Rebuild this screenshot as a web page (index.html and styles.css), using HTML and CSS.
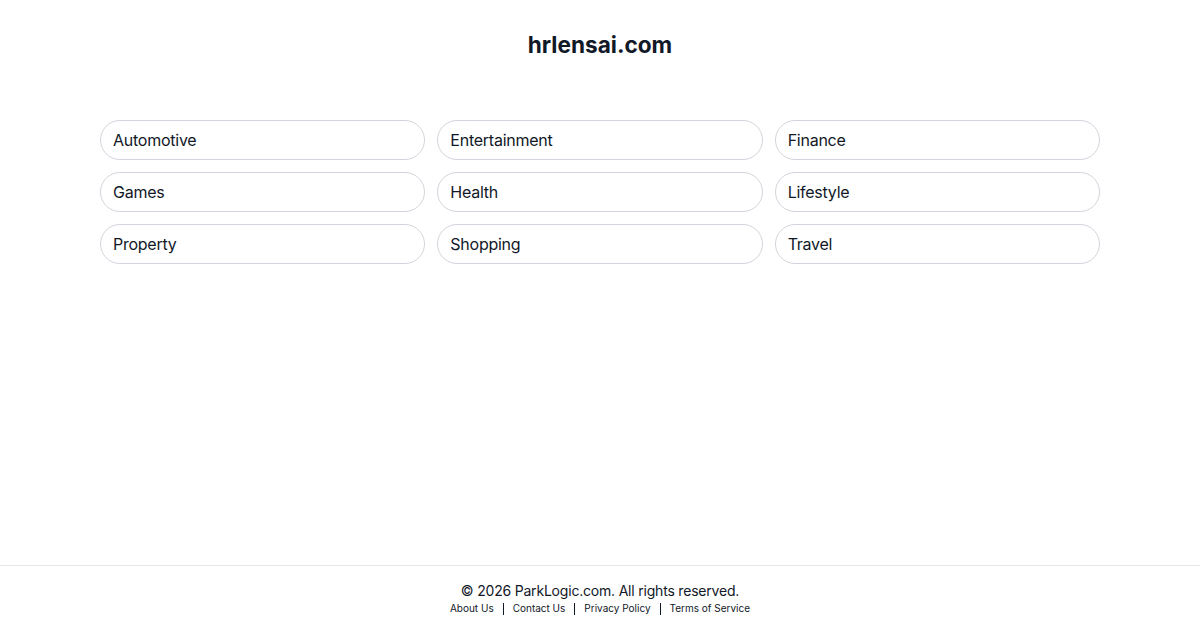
FILE: index.html
```html
<!DOCTYPE html>
<html lang="en">
<head>
<meta charset="utf-8">
<title>hrlensai.com</title>
<link rel="stylesheet" href="styles.css">
</head>
<body>
<div class="page">
  <header class="header">
    <h1 class="title">hrlensai.com</h1>
  </header>
  <main class="main">
    <div class="grid">
      <a class="pill" href="#">Automotive</a>
      <a class="pill" href="#">Entertainment</a>
      <a class="pill" href="#">Finance</a>
      <a class="pill" href="#">Games</a>
      <a class="pill" href="#">Health</a>
      <a class="pill" href="#">Lifestyle</a>
      <a class="pill" href="#">Property</a>
      <a class="pill" href="#">Shopping</a>
      <a class="pill" href="#">Travel</a>
    </div>
  </main>
  <footer class="footer">
    <p class="copy">© 2026 ParkLogic.com. All rights reserved.</p>
    <nav class="links">
      <a href="#">About Us</a><span class="sep"></span><a href="#">Contact Us</a><span class="sep"></span><a href="#">Privacy Policy</a><span class="sep"></span><a href="#">Terms of Service</a>
    </nav>
  </footer>
</div>
</body>
</html>
```
FILE: styles.css
```css
* { box-sizing: border-box; }
html, body { margin: 0; padding: 0; }
body {
  font-family: Inter, "Noto Sans", sans-serif;
  color: #111827;
  background: #ffffff;
}
.page {
  min-height: 100vh;
  display: flex;
  flex-direction: column;
}
.header {
  padding-top: 31px;
  text-align: center;
}
.title {
  margin: 0;
  font-size: 22.6px;
  line-height: 28px;
  font-weight: 700;
  color: #111827;
}
.main {
  flex: 1;
  padding-top: 61px;
}
.grid {
  width: 1000px;
  margin: 0 auto;
  display: grid;
  grid-template-columns: repeat(3, 1fr);
  gap: 12px;
}
.pill {
  display: block;
  height: 40px;
  line-height: 38px;
  padding: 0 12px;
  border: 1px solid #d1d5db;
  border-radius: 20px;
  font-size: 16px;
  letter-spacing: -0.25px;
  color: #111827;
  text-decoration: none;
}
.footer {
  border-top: 1px solid #e5e7eb;
  padding: 15px 0 14px;
  text-align: center;
}
.copy {
  margin: 0;
  font-size: 14px;
  line-height: 20px;
  letter-spacing: -0.2px;
  color: #111827;
}
.links {
  display: flex;
  justify-content: center;
  align-items: center;
  font-size: 10px;
  line-height: 15px;
}
.links a {
  color: #111827;
  text-decoration: none;
}
.sep {
  display: inline-block;
  width: 1px;
  height: 12px;
  background: #111827;
  margin: 0 9px;
}
```
